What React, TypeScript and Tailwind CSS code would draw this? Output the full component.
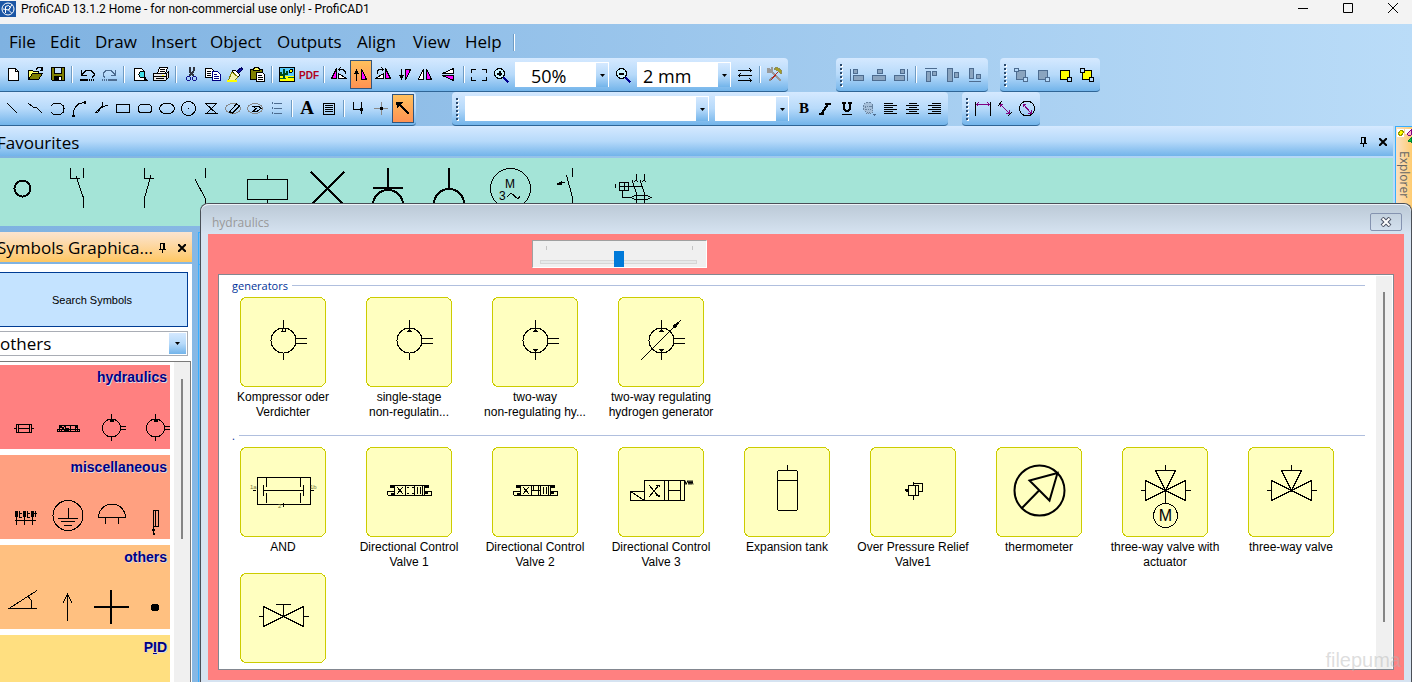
import { useState, type ReactNode } from 'react';
import clsx from 'clsx';

const BAR = 'bg-linear-to-b from-[#d5e9ff] via-[#b7dafa] to-[#72b4ea]';
const UI_FONT = "font-['Open_Sans','Noto_Sans',sans-serif]";
const MAGENTA = '#ff00ff';
const DIM = '#8aa4bf';
const DIM_LINE = '#4d6c90';

const menuItems = [
  { label: 'File', width: 'w-[41px]' },
  { label: 'Edit', width: 'w-[45px]' },
  { label: 'Draw', width: 'w-[56px]' },
  { label: 'Insert', width: 'w-[59px]' },
  { label: 'Object', width: 'w-[67px]' },
  { label: 'Outputs', width: 'w-[80px]' },
  { label: 'Align', width: 'w-[56px]' },
  { label: 'View', width: 'w-[52px]' },
  { label: 'Help', width: 'w-[45px]' }
];

// Toolbar glyphs, drawn on a 20x21 grid
const glyphs: Record<string, ReactNode> = {
  new: <><path d="M5.5 4.5h7l3 3v9h-10z" fill="#fff" /><path d="M12.5 4.5v3h3" /></>,
  open: (
    <>
      <path d="M3.5 15.5v-9h4l1 1h5v3" fill="#ffff66" />
      <path d="M3.5 15.5l4-6h10l-4 6z" fill="#808000" />
      <path d="M11 5.5l2-2h3l1 2M17.5 3v3h-3" />
    </>
  ),
  save: (
    <>
      <path d="M4.5 3.5h13v13h-12l-1-1z" fill="#808000" />
      <path d="M7.5 3.5h7v6h-7z" fill="#c3dff8" />
      <path d="M7 12h8v4h-8z" fill="#000" stroke="none" />
      <path d="M12 13h2v3h-2z" fill="#fff" stroke="none" />
    </>
  ),
  undo: <><path d="M4.500 6v5h5M5 10.500l4-4h5l3 3v2l-2 2" /><path d="M3 16h8" strokeWidth="2" /><path d="M12 16h6" strokeWidth="2" strokeDasharray="1 1" /></>,
  redo: <g stroke={DIM_LINE}><path d="M16.500 6v5h-5M16 10.500l-4-4h-5l-3 3v2l2 2" /><path d="M9 16h9" strokeWidth="2" /><path d="M3 16h6" strokeWidth="2" strokeDasharray="1 1" /></g>,
  preview: (
    <>
      <path d="M5.5 4.500h7l3 3v9h-10z" fill="#fff" />
      <circle cx="13" cy="10.500" r="3" fill="#40e0e8" />
      <path d="M15 13l3 4" strokeWidth="2" />
    </>
  ),
  print: (
    <>
      <path d="M6.500 9.500l2-6h8l-2 6z" fill="#fff" />
      <path d="M9 5.500h5M8.500 7.500h5" />
      <path d="M2.500 9.500h13l2-2v6l-3 3h-12z" fill="#e8e8e8" />
      <path d="M3 12.500h12M5 14.500h8M15.500 9v6" />
      <path d="M11 11h2v1h-2z" fill="#ff0" stroke="none" />
    </>
  ),
  cut: (
    <>
      <path d="M8.500 3v4l4 5M12.500 3v4l-4 5" stroke="#30343f" strokeWidth="2" />
      <g stroke="#10108c"><circle cx="7.500" cy="14.500" r="2" /><circle cx="13.500" cy="14.500" r="2" /></g>
    </>
  ),
  copy: (
    <>
      <path d="M2.500 4.500h6l2 2v7h-8z" fill="#fff" />
      <path d="M4 7.500h4M4 9.500h4M4 11.500h4" />
      <g stroke="#000080"><path d="M9.500 7.500h5l3 3v6h-8z" fill="#fff" /><path d="M11 10.500h3M11 12.500h5M11 14.500h5" /></g>
    </>
  ),
  brush: (
    <>
      <path d="M16.500 3.500l1 2-4 4-2-2z" fill="#1010a0" stroke="#000060" />
      <path d="M10 6l5 5-2 2-6-6z" fill="#fff" />
      <path d="M7 8l6 5-4 4H3z" fill="#f2f2b0" stroke="#808000" />
      <path d="M2 17h10" stroke="#ff0" strokeWidth="2" />
    </>
  ),
  paste: (
    <>
      <path d="M3.500 5.500h12v10h-12z" fill="#808000" />
      <path d="M6.500 5.500l1-2h4l1 2v1h-6z" fill="#ffff66" />
      <path d="M9.500 8.500h6l2 2v7h-8z" fill="#fff" />
      <path d="M11 11.500h4M11 13.500h5M11 15.500h5" />
    </>
  ),
  image: (
    <>
      <path d="M2.500 3.500h15v14h-15z" fill="#5cf" />
      <path d="M3 12h14v5h-14z" fill="#ff0" stroke="none" />
      <path d="M7 5v10M4 8v3h3M10 7v3h-3" stroke="#004818" strokeWidth="2" />
      <circle cx="14" cy="7" r="1.500" fill="#ff0" />
      <path d="M3 14.500h6M11 13.500h6" stroke="#063" />
    </>
  ),
  pdf: (
    <text x="10" y="15" textAnchor="middle" fill="#b0001c" stroke="none" className="font-['Liberation_Sans_Narrow','Liberation_Sans',sans-serif] text-[10px] font-bold">
      PDF
    </text>
  ),
  rotateLeft: (
    <>
      <path d="M7.500 4.500v10h-5z" fill={MAGENTA} />
      <path d="M9.500 9.500l8 5h-8z" fill="#fff" />
      <path d="M10 5.500h4l2 2v2M11.500 3.500l-2 2 2 2" />
    </>
  ),
  upright: <><path d="M10.500 5v10.500h5z" fill={MAGENTA} /><path d="M5.500 6v10.500" /><path d="M3 10l2.500-5L8 10z" fill="#000" stroke="none" /></>,
  rotateRight: (
    <>
      <path d="M12.500 4.500v10h5z" fill={MAGENTA} />
      <path d="M10.500 9.500l-8 5h8z" fill="#fff" />
      <path d="M10 5.500h-4l-2 2v2M8.500 3.500l2 2-2 2" />
    </>
  ),
  inverted: <><path d="M10.500 16V5.500h5z" fill={MAGENTA} /><path d="M6.500 5v10" /><path d="M4 11l2.500 5L9 11z" fill="#000" stroke="none" /></>,
  mirrorH: <><path d="M6.500 5v10.500h-5z" fill="#fff" /><path d="M9.500 5v10.500h5z" fill={MAGENTA} /></>,
  mirrorV: <><path d="M14.500 4.500v5h-11z" fill="#fff" /><path d="M14.500 16.500v-5h-11z" fill={MAGENTA} /></>,
  fit: <path d="M2.500 9V5.500h4M13 5.500h4.500V9M17.500 13v3.500h-4.500M6.500 16.500h-4V13" />,
  zoomIn: (
    <>
      <circle cx="8.500" cy="9.500" r="5" fill="#c9f3ff" />
      <path d="M6 9.500h5M8.500 7v5" strokeWidth="2" />
      <path d="M12.500 13.500l5 5" stroke="#000090" strokeWidth="2" />
    </>
  ),
  zoomOut: (
    <>
      <circle cx="8.500" cy="9.500" r="5" fill="#c9f3ff" />
      <path d="M6 9.500h5" strokeWidth="2" />
      <path d="M12.500 13.500l5 5" stroke="#000090" strokeWidth="2" />
    </>
  ),
  swap: <path d="M3 6.500h14M14.500 4.500l2 2-2 2M3 11.500h14M5.500 9.500l-2 2 2 2M3 16.500h14M14.500 14.500l2 2-2 2" />,
  tools: (
    <>
      <path d="M4 5l12 12M3 4v4h3M7 3v4" stroke="#999" strokeWidth="2" />
      <path d="M4 17l3-3" stroke="#8b8b8b" strokeWidth="2" />
      <path d="M6 16l7-8" stroke="#b02a20" />
      <path d="M9 5l3-2 5 4-1 3-3-3z" fill="#a8a020" stroke="#8f8f58" />
    </>
  ),
  line: <path d="M4 5l10 10" />,
  polyline: <path d="M3 5l5 4h3l6 6" />,
  arc: <path d="M4 7.500l3-2h6l3 2 1 3-1 4-3 2h-6l-3-2" />,
  bezier: <><path d="M4.500 17v-4l2-4 3-3 5-1.500h2" /><path d="M3 17h3v2h-3zM15 3h2v3h-2z" fill="#000" stroke="none" /></>,
  curve: <path d="M17 7.500c-5 0-7 2-9 5-1 2-3 3-3 2s3-3 5-5 2-4 1-5" />,
  rect: <path d="M3.500 6.500h13v8h-13z" />,
  roundRect: <rect x="3.500" y="6.500" width="13" height="8" rx="3" />,
  ellipse: <ellipse cx="10" cy="10.500" rx="7.500" ry="5.500" />,
  circle: <><circle cx="9.500" cy="10.500" r="7" /><path d="M9 10.500h1" /></>,
  hourglass: <path d="M4 5.500h12M4 15.500h13M5 6l10 9M15 6l-9 9" />,
  ellipseCut: <><ellipse cx="10" cy="10.500" rx="7.500" ry="5" stroke="#888" /><path d="M6.500 14l7-8 3 2-7 7z" /></>,
  ellipsePart: <><ellipse cx="10" cy="10.500" rx="7.500" ry="5" stroke="#888" /><path d="M8 8.500h6l2 2-4 3h-4l3-3z" /></>,
  bullets: <path d="M7 5.500h8M7 10.500h8M7 15.500h8M5 4v2M5 9v2M5 14v2" stroke={DIM_LINE} />,
  text: <text x="10" y="16" textAnchor="middle" fill="#000" stroke="none" className="font-['Liberation_Serif',serif] text-[19px] font-bold">A</text>,
  note: <path d="M4.500 5.500h11v11h-11zM6 7.500h8M6 9.500h8M6 11.500h8M6 13.500h8" />,
  wire: <><path d="M4.500 4v7.500h8M12.500 4v12" /><path d="M11 10h3v3h-3z" fill="#000" stroke="none" /></>,
  node: <><path d="M3 10.500h14M10.500 4v13" stroke="#888" /><path d="M9 9h3v3H9z" fill="#000" stroke="none" /></>,
  pointer: <><path d="M5 5l11 11" strokeWidth="2" /><path d="M3 4h7l-6 6z" fill="#000" stroke="none" /></>,
  bold: <text x="11" y="15" textAnchor="middle" fill="#000" stroke="none" className="font-['Liberation_Serif',serif] text-[15px] font-bold">B</text>,
  italic: <path d="M4 15.500h5M10 5.500h6M7 15l6-9" strokeWidth="2" />,
  underline: <><path d="M7 5v6l2 2h2l2-2V5M5 5h4M11 5h4" strokeWidth="1.500" /><path d="M5 16.500h10" /></>,
  colour: (
    <g stroke="#66829f">
      <circle cx="9" cy="9" r="5" fill="#a5bfd9" strokeDasharray="2 1" />
      <circle cx="10" cy="12" r="4" fill="#a5bfd9" strokeDasharray="1 1" />
      <path d="M6 8h6M7 11h6M8 14h4" strokeDasharray="1 1" />
      <path d="M13 15.500h5l-2.500 3z" fill="#4d6c90" stroke="none" />
    </g>
  ),
  left: <path d="M3 5.500h9M3 7.500h13M3 9.500h9M3 11.500h13M3 13.500h9M3 15.500h13" />,
  center: <path d="M6 5.500h8M3 7.500h13M6 9.500h8M3 11.500h13M6 13.500h8M3 15.500h13" />,
  right: <path d="M7 5.500h9M3 7.500h13M7 9.500h9M3 11.500h13M7 13.500h9M3 15.500h13" />,
  alignLeft: <g stroke={DIM_LINE} fill={DIM}><path d="M3.500 5v12M6.500 5.500h4v4h-4zM6.500 11.500h10v5h-10z" /></g>,
  alignMiddle: <g stroke={DIM_LINE} fill={DIM}><path d="M8.500 5.500h5v4h-5zM3.500 11.500h13v5h-13z" /></g>,
  alignRight: <g stroke={DIM_LINE} fill={DIM}><path d="M16.500 5v12M9.500 5.500h4v4h-4zM3.500 11.500h10v5h-10z" /></g>,
  alignTop: <g stroke={DIM_LINE} fill={DIM}><path d="M4 4.500h12M5.500 7.500h4v10h-4zM11.500 7.500h4v4h-4z" /></g>,
  alignCenter: <g stroke={DIM_LINE} fill={DIM}><path d="M4.500 4.500h5v13h-5zM11.500 8.500h4v5h-4z" /></g>,
  alignBottom: <g stroke={DIM_LINE} fill={DIM}><path d="M4 17.500h12M4.500 4.500h4v10h-4zM11.500 10.500h4v4h-4z" /></g>,
  group: <g stroke={DIM_LINE} fill={DIM}><path d="M5.500 6.500h9v9h-9z" /><path d="M3.500 4.500h4v3h-4zM12.500 13.500h4v4h-4z" fill="#b7dafa" /></g>,
  ungroup: <g stroke={DIM_LINE} fill={DIM}><path d="M5.500 6.500h9v9h-9z" /><path d="M12.500 13.500h4v4h-4z" fill="#b7dafa" /></g>,
  toFront: <><path d="M5.500 6.500h9v9h-9z" fill="#ff0" /><path d="M12.500 13.500h4v4h-4z" fill="#b7dafa" /></>,
  toBack: <><path d="M5.500 6.500h9v9h-9z" fill="#ff0" /><path d="M3.500 4.500h4v4h-4zM12.500 13.500h4v4h-4z" fill="#b7dafa" /></>,
  dimH: <><path d="M2.500 4v14M17.500 4v14" /><path d="M3 6.500h14M5.500 4.500l-2 2 2 2M14.500 4.500l2 2-2 2" stroke="#800080" /></>,
  dimSlant: <><path d="M3 8l4-5M13 18l4-4" /><path d="M5 6l9 9M5 9V6h3M14 12v3h-3" stroke="#800080" /></>,
  dimRound: <><circle cx="10" cy="10.500" r="7.500" /><path d="M6 6l8 9M6 9V6h3M14 12v3h-3" stroke="#800080" /></>
};

const drawTools = ['line', 'polyline', 'arc', 'bezier', 'curve', 'rect', 'roundRect', 'ellipse', 'circle', 'hourglass', 'ellipseCut', 'ellipsePart', 'bullets'];

function Tool({ name, active = false }: { name: string; active?: boolean }) {
  return (
    <button
      type="button"
      aria-label={name}
      className={clsx(
        'flex w-[22px] shrink-0 items-center justify-center',
        active ? 'my-[2px] border border-[#31557c] bg-linear-to-b from-[#ffc05c] to-[#ff9252]' : 'h-full'
      )}
    >
      <svg viewBox="0 0 20 21" className="h-[21px] w-[20px] shrink-0" fill="none" stroke="#000" shapeRendering="crispEdges">
        {glyphs[name]}
      </svg>
    </button>
  );
}

function Tools({ names }: { names: string[] }) {
  return <>{names.map((name) => <Tool key={name} name={name} />)}</>;
}

function Divider() {
  return (
    <span className="flex w-2 shrink-0 items-center justify-center">
      <span className="h-[17px] w-[2px] border-r border-white bg-[#6f9cc4]" />
    </span>
  );
}

function Grip() {
  return (
    <span className="flex w-[10px] shrink-0 flex-col items-center justify-center gap-[2px]">
      {[0, 1, 2, 3, 4, 5].map((dot) => (
        <span key={dot} className="size-[2px] bg-[#2b4a6d] shadow-[1px_1px_0_#fff]" />
      ))}
    </span>
  );
}

function Bar({ floating = false, children }: { floating?: boolean; children: ReactNode }) {
  return (
    <div className={clsx('flex h-[34px] shrink-0 items-stretch rounded-r border-b border-[#2f6596] pr-[2px]', floating ? 'rounded-l' : 'pl-[2px]', BAR)}>
      {floating ? <Grip /> : null}
      {children}
    </div>
  );
}

function Combo({ label, value, width, indent = 'pl-1' }: { label: string; value: string; width: string; indent?: string }) {
  return (
    <span className={clsx('relative mx-[3px] my-1 flex shrink-0 bg-white', width)}>
      <select aria-label={label} defaultValue={value} className={clsx('w-full appearance-none text-[18px] leading-[28px]', UI_FONT, indent)}>
        <option>{value}</option>
      </select>
      <span className={clsx('pointer-events-none absolute top-px right-px bottom-0 flex w-[12px] items-center justify-center', BAR)}>
        <ArrowDown />
      </span>
    </span>
  );
}

function ArrowDown() {
  return (
    <svg viewBox="0 0 5 3" className="h-[3px] w-[5px]">
      <path d="M0 0h5L2.500 3z" />
    </svg>
  );
}

function PanelButtons({ gap }: { gap: string }) {
  return (
    <span className={clsx('flex items-center', gap)}>
      <button type="button" aria-label="Pin panel">
        <svg viewBox="0 0 8 10" className="h-[10px] w-[8px]" fill="none" stroke="#000" shapeRendering="crispEdges">
          <path d="M1.500 6V.5h4V6M4.500 1v5M0 6.500h7M3.500 6v4" />
        </svg>
      </button>
      <button type="button" aria-label="Close panel">
        <svg viewBox="0 0 8 8" className="size-[8px]" stroke="#000" strokeWidth="2">
          <path d="M0 0l8 8M8 0l-8 8" />
        </svg>
      </button>
    </span>
  );
}

const favourites: { name: string; art: ReactNode }[] = [
  { name: 'terminal', art: <circle cx="30.500" cy="30.500" r="8" strokeWidth="2" /> },
  { name: 'change-over contact', art: <path d="M17.500 10v10.500h9M30.500 10v10M23 18l7.500 22v10" /> },
  { name: 'break contact', art: <path d="M30.500 10v10.500h9M37 17l-6.500 23v10" /> },
  { name: 'make contact', art: <path d="M30.500 10v10M20 21l10.500 20v9" /> },
  { name: 'coil', art: <path d="M11.500 21.500h40v20h-40zM31.500 17v4M31.500 42v4" /> },
  { name: 'lamp', art: <path d="M14 14l33 33M47 14l-33 33" strokeWidth="2" /> },
  { name: 'socket with earth', art: <path d="M30 10v20M15 30h30M15 47a15 15 0 0 1 30 0" strokeWidth="2" /> },
  { name: 'socket', art: <path d="M30 10v21M15 46a15 15 0 0 1 30 0" strokeWidth="2" /> },
  {
    name: 'three-phase motor',
    art: (
      <>
        <circle cx="30.500" cy="30.500" r="20" />
        <path d="M27 39l4-4 7 6 2-3" />
        <g fill="#000" stroke="none" className="font-['Liberation_Sans',sans-serif] text-[12px]">
          <text x="30" y="30" textAnchor="middle">M</text>
          <text x="19" y="42">3</text>
        </g>
      </>
    )
  },
  { name: 'auxiliary contact', art: <><path d="M31.500 10v9M25.500 17l6 23v9M17 26l7-2" /><path d="M16 26l4-2v2z" fill="#000" /></> },
  {
    name: 'circuit breaker',
    art: (
      <>
        <path d="M17.500 24.500h9v8h-9zM22 24v9M18 28.500h23M13.500 26v4M20.500 33v6.500h8" />
        <path d="M34.500 16v7M42.500 16v7M32 24l2-2 2 2M40 24l2-2 2 2M30 22l4.500 13v16M38 22l4.500 13v16" />
        <path d="M29 39.500l4-2h12l4 2-4 2h-12z" />
      </>
    )
  }
];

const pumpBody = <><circle cx="43.500" cy="43.500" r="12.500" /><path d="M43.500 23v8M43.500 56v7M56 41.500h10.500M56 46.500h10.500" /></>;
const topHead = <path d="M43.500 31l-2.500 4h5z" fill="#000" stroke="none" />;
const bottomHead = <path d="M43.500 56l-2.500-4h5z" fill="#000" stroke="none" />;
const valveBody = <path d="M43.500 43.500L33.500 23.500h20zM43.500 43.500l-20-10v20zM43.500 43.500l20-10v20zM43.500 18v5M19 43.500h4M64 43.500h5" />;
const controlFrame = (
  <>
    <path d="M28.500 38.500h30v10h-30zM21.500 48.500h44M21.500 44.500h7M58.500 44.500h7M21.500 44v4M65.500 44v4M39.500 38v10M48.500 38v10M56.500 38v10" />
    <path d="M24 38h5v3h-5zM58 38h5v3h-5zM25 46h3v2h-3zM59 45h3v2h-3z" fill="#000" stroke="none" />
    <path d="M31 40l6 7M37 40l-6 7M51.500 40v7M54.500 40v7" />
  </>
);

interface SymbolCard {
  lines: string[];
  art: ReactNode;
}

const generators: SymbolCard[] = [
  { lines: ['Kompressor oder', 'Verdichter'], art: <>{pumpBody}<path d="M42 31.500v3M45 31.500v3M41 34.500h5" /></> },
  { lines: ['single-stage', 'non-regulatin...'], art: <>{pumpBody}{topHead}</> },
  { lines: ['two-way', 'non-regulating hy...'], art: <>{pumpBody}{topHead}{bottomHead}</> },
  {
    lines: ['two-way regulating', 'hydrogen generator'],
    art: <>{pumpBody}{topHead}{bottomHead}<path d="M23 63l40-40" /><path d="M61 25l-6 4 2 2z" fill="#000" /></>
  }
];

const hydraulicParts: SymbolCard[] = [
  {
    lines: ['AND'],
    art: (
      <>
        <path d="M17.500 30.500h53v27h-53zM26.500 30v10M26.500 46v10M60.500 30v10M60.500 46v10M23.500 43.500h40M23.500 38v11M63.500 38v11M13 43.500h3M71 43.500h3M43.500 56v4" />
        <g fill="#77773c" stroke="none" className="font-['Liberation_Sans',sans-serif] text-[6px]">
          <text x="10" y="42">1a</text>
          <text x="70" y="42">1b</text>
          <text x="38" y="61">2</text>
        </g>
      </>
    )
  },
  { lines: ['Directional Control', 'Valve 1'], art: <>{controlFrame}<path d="M41 40.500h2M46 40.500h2M41 46.500h2M46 46.500h2" /></> },
  { lines: ['Directional Control', 'Valve 2'], art: <>{controlFrame}<path d="M40 43.500h8M41.500 39v5M46.500 39v9" /></> },
  {
    lines: ['Directional Control', 'Valve 3'],
    art: (
      <>
        <path d="M26.500 33.500h40v20h-40zM12.500 44.500h14v9h-14zM12.500 44.500l14 9M46.500 33v20M50.500 33v20M62.500 33v20M50.500 43.500h12" />
        <path d="M31 38l10 12M41 38l-10 12M38 48h3v2M41 40v-2h-3" />
        <path d="M67 33.500l1 4 2-4 1 4 1-4 1 4 1-4 1 4" shapeRendering="auto" />
      </>
    )
  },
  { lines: ['Expansion tank'], art: <><rect x="33.500" y="23.500" width="20" height="40" rx="2" /><path d="M34 33.500h19M43.500 18v5" /></> },
  {
    lines: ['Over Pressure Relief', 'Valve1'],
    art: <><path d="M38.500 38.500h10v10h-10zM43.500 38v-2h9v8h-4M45.500 38v10M43.500 35v3M43.500 49v4" /><path d="M36 43.500h2M35 43l3-1v3z" fill="#000" /></>
  },
  {
    lines: ['thermometer'],
    art: <g strokeWidth="2" shapeRendering="auto"><circle cx="43.500" cy="43.500" r="25" /><path d="M26 61l17.500-18M61.500 26L33.500 33.500 53.500 53.500z" /></g>
  },
  {
    lines: ['three-way valve with', 'actuator'],
    art: (
      <>
        {valveBody}
        <path d="M43.500 44v12" />
        <circle cx="43.500" cy="68.500" r="12" />
        <text x="43.500" y="74" textAnchor="middle" fill="#000" stroke="none" className="font-['Liberation_Sans',sans-serif] text-[16px]">M</text>
      </>
    )
  },
  { lines: ['three-way valve'], art: valveBody },
  { lines: [], art: <path d="M43.500 43.500l-20-10v20zM43.500 43.500l20-10v20zM19 43.500h4M64 43.500h5M43.500 43V31.500M36 31.500h15" /> }
];

// Small previews, each on a 44x42 grid
const pumpPreview = <><circle cx="21.500" cy="21" r="9" /><path d="M21.500 7v5M21.500 30v4M31 19.500h5M31 22.500h5" /><path d="M20 13h4v2h-4z" fill="#000" stroke="none" /></>;

const categories: { name: string; colour: string; previews: ReactNode[] }[] = [
  {
    name: 'hydraulics',
    colour: 'bg-[#ff8080]',
    previews: [
      <path d="M14.500 17.500h15v8h-15zM16.500 17v8M27.500 17v8M17 21.500h10M12 21.500h2M30 21.500h2" />,
      <><path d="M11.500 22.500h22v2h-22zM13.500 18.500h18v6h-18zM19.500 18v6M24.500 18v6M29.500 18v6M15 19l4 5M19 19l-4 5" /><path d="M13 18h3v3h-3zM20 21h3v3h-3zM29 18h2v3h-2z" fill="#000" stroke="none" /></>,
      pumpPreview,
      pumpPreview
    ]
  },
  {
    name: 'miscellaneous',
    colour: 'bg-[#ffa080]',
    previews: [
      <><path d="M13 23.500h21M14.500 20v8M22.500 20v8M30.500 20v8M17.500 14v6h2M25.500 14v6h2M33.500 14v6M17 16.500h3M25 16.500h3M32 16.500h3" /><path d="M13 14h3v6h-3zM21 14h3v6h-3zM29 14h3v6h-3z" fill="#000" stroke="none" /></>,
      <><circle cx="22" cy="18.500" r="15" /><path d="M22.500 11v10M12 21.500h20M15 24.500h14M18 28.500h8" /></>,
      <path d="M8.500 20.500a13 13 0 0 1 27 0zM15.500 20v7M28.500 20v7" />,
      <><path d="M19.500 13.500h5v16h-5zM21.500 13v16M19.500 30v8" /><path d="M18 32h3v2h-3zM19 36h2v2h-2z" fill="#000" stroke="none" /></>
    ]
  },
  {
    name: 'others',
    colour: 'bg-[#ffc080]',
    previews: [
      <path d="M35 3.500L7 21.500h28M26 9l3 4 1 8" />,
      <path d="M21.500 8v26M17 16l4.500-9 4.500 9" />,
      <path d="M4 20h35M21 3v34" strokeWidth="2" />,
      <circle cx="21" cy="20.500" r="3.500" fill="#000" />
    ]
  },
  { name: 'PID', colour: 'bg-[#ffdf80]', previews: [] }
];

function SymbolGroup({ title, items }: { title: string; items: SymbolCard[] }) {
  return (
    <section>
      <div className="mb-[2px] ml-3 flex h-[20px] items-center gap-1">
        <h3 className={clsx('text-[11px] leading-none text-[#003399]', UI_FONT)}>{title}</h3>
        <span className="mr-[11px] h-px flex-1 bg-[#b0bfde]" />
      </div>
      <div className="flex flex-wrap">
        {items.map((item, index) => (
          <button key={index} type="button" className="flex h-[126px] w-[126px] flex-col items-center text-center text-[12px] leading-[15px]">
            <svg viewBox="0 0 86 90" className="h-[90px] w-[86px] shrink-0" fill="none" stroke="#000" shapeRendering="crispEdges">
              <rect x="0.500" y="0.500" width="85" height="89" rx="6" fill="#ffffc0" stroke="#cccc00" />
              {item.art}
            </svg>
            <span className="mt-[3px] whitespace-nowrap">
              {item.lines.map((line) => (
                <span key={line} className="block">{line}</span>
              ))}
            </span>
          </button>
        ))}
      </div>
    </section>
  );
}

function HydraulicsWindow() {
  const [size, setSize] = useState(50);

  return (
    <div className="absolute top-[203px] right-0 bottom-0 left-[200px] flex flex-col rounded-t-lg border border-b-0 border-[#4a4f57] bg-[#d6e3f1] px-[7px] pb-[2px]">
      <div className="-mx-[7px] flex h-[30px] shrink-0 items-center justify-between rounded-t-lg border-t border-[#eef3f8] bg-linear-to-b from-[#bccad7] to-[#d6e3f1] pr-[9px] pl-[11px]">
        <h2 className={clsx('mt-[7px] text-[12px] text-[#999]', UI_FONT)}>hydraulics</h2>
        <button type="button" aria-label="Close window" className="mt-1 flex h-[18px] w-[32px] items-center justify-center rounded-xs border border-[#8593b0]">
          <svg viewBox="0 0 12 10" className="h-[10px] w-[12px]">
            <path d="M2 1l8 8M10 1l-8 8" stroke="#4b5163" strokeWidth="4" />
            <path d="M2.500 1.500l7 7M9.500 1.500l-7 7" stroke="#fff" strokeWidth="2" />
          </svg>
        </button>
      </div>
      <div className="flex min-h-0 flex-1 flex-col bg-[#ff8080] px-[10px] pt-[6px] pb-[10px]">
        <div className="relative ml-[314px] h-[28px] w-[175px] shrink-0 border border-t-[#a0a0a0] border-r-white border-b-white border-l-[#a0a0a0] bg-[#f0f0f0]">
          <div className="flex justify-between px-[13px] pt-[5px]">
            <span className="h-1 w-px bg-[#c4c4c4]" />
            <span className="h-1 w-px bg-[#c4c4c4]" />
          </div>
          <input
            type="range"
            aria-label="Symbol size"
            value={size}
            onChange={(event) => setSize(Number(event.target.value))}
            className="absolute bottom-0 left-[7px] h-[10px] w-[157px] appearance-none bg-transparent [&::-webkit-slider-runnable-track]:h-[4px] [&::-webkit-slider-runnable-track]:border [&::-webkit-slider-runnable-track]:border-[#d6d6d6] [&::-webkit-slider-runnable-track]:bg-[#e7eaea] [&::-webkit-slider-thumb]:-mt-[10px] [&::-webkit-slider-thumb]:h-[16px] [&::-webkit-slider-thumb]:w-[10px] [&::-webkit-slider-thumb]:appearance-none [&::-webkit-slider-thumb]:bg-[#007ad9]"
          />
        </div>
        <div className="mt-[6px] flex min-h-0 flex-1 border border-[#828790] bg-white">
          <div className="flex min-w-0 flex-1 flex-col gap-[2px] overflow-hidden pl-px">
            <SymbolGroup title="generators" items={generators} />
            <SymbolGroup title="." items={hydraulicParts} />
          </div>
          <div className="mr-px mt-px flex w-[16px] justify-center bg-[#f0f0f0] pt-4 pb-[47px]">
            <span className="w-[2px] bg-[#858585]" />
          </div>
        </div>
      </div>
      <span className="absolute right-[10px] bottom-[10px] text-[20px] leading-[24px] text-[#b4b4b4]/45">filepuma</span>
    </div>
  );
}

function SymbolsPanel() {
  return (
    <aside className="flex w-[200px] shrink-0 flex-col">
      <div className="flex h-[30px] shrink-0 items-center justify-between bg-linear-to-b from-[#fbe4d0] to-[#ffc75f] pt-[2px] pr-[6px] pl-[5px]">
        <h2 className={clsx('text-[17px] whitespace-nowrap', UI_FONT)}>Symbols Graphica...</h2>
        <PanelButtons gap="gap-[11px]" />
      </div>
      <div className="mt-[2px] flex min-h-0 flex-1 flex-col bg-white pt-2">
        <button type="button" className="mx-1 h-[55px] shrink-0 border border-[#003c93] bg-[#c4e3ff] pt-px text-[11px]">
          Search Symbols
        </button>
        <span className="relative mx-1 mt-1 flex h-[25px] shrink-0 border border-[#a9adb5]">
          <select aria-label="Library" defaultValue="others" className={clsx('w-full appearance-none pt-px pl-[3px] text-[17px] leading-[22px]', UI_FONT)}>
            <option>others</option>
          </select>
          <span className={clsx('pointer-events-none absolute top-px right-px bottom-px flex w-[17px] items-center justify-center', BAR)}>
            <ArrowDown />
          </span>
        </span>
        <div className="mt-[5px] mr-px flex min-h-0 flex-1 border-t border-r border-[#7a7a7a]">
          <ul className="flex min-w-0 flex-1 flex-col gap-[6px] overflow-hidden pt-[3px] pr-1">
            {categories.map((category) => (
              <li key={category.name} className="shrink-0">
                <button type="button" className={clsx('flex h-[84px] w-full flex-col justify-between overflow-hidden', category.colour)}>
                  <span className="mt-[3px] w-full pr-[3px] text-right text-[14px] leading-[18px] font-bold text-[#000080] [text-shadow:1px_1px_0_#d8d8e8]">
                    {category.name === 'PID' ? <>P<u>I</u>D</> : category.name}
                  </span>
                  <span className="flex pl-[10px]">
                    {category.previews.map((preview, index) => (
                      <svg key={index} viewBox="0 0 44 42" className="h-[42px] w-[44px] shrink-0" fill="none" stroke="#000" shapeRendering="crispEdges">
                        {preview}
                      </svg>
                    ))}
                  </span>
                </button>
              </li>
            ))}
          </ul>
          <div className="flex w-[16px] justify-center bg-[#f0f0f0] pt-[17px]">
            <span className="h-[160px] w-[2px] bg-[#858585]" />
          </div>
        </div>
      </div>
    </aside>
  );
}

function TitleBar() {
  return (
    <header className="flex h-6 shrink-0 items-start justify-between bg-[#f3f3f3]">
      <div className="flex items-center gap-[5px]">
        <svg viewBox="0 0 16 16" className="size-4" fill="none" stroke="#fff">
          <path d="M0 0h16v16H0z" fill="#1b56a5" stroke="none" />
          <circle cx="8" cy="8" r="6" />
          <path d="M5.500 12V5.500l3-1 2 2-2 2.500 3 3M3 8l5.500 1L12 3.500" />
        </svg>
        <h1 className="font-['Roboto',sans-serif] text-[12px] leading-[18px]">ProfiCAD 13.1.2 Home - for non-commercial use only! - ProfiCAD1</h1>
      </div>
      <div className="mt-[2px] mr-[13px] flex gap-[33px]">
        {['M1 6.500h10', 'M1.500 1.500h9v9h-9z', 'M1 1l10 10M11 1L1 11'].map((shape, index) => (
          <button key={shape} type="button" aria-label={['Minimize', 'Maximize', 'Close'][index]}>
            <svg viewBox="0 0 12 12" className="size-3" fill="none" stroke="#000">
              <path d={shape} />
            </svg>
          </button>
        ))}
      </div>
    </header>
  );
}

export default function App() {
  return (
    <div className="relative flex h-screen flex-col overflow-hidden bg-linear-to-r from-[#7fb2e1] to-[#badcf8] font-['Liberation_Sans',Arial,sans-serif] text-black">
      <TitleBar />
      <nav className={clsx('flex h-[34px] shrink-0 items-center pt-[2px] pl-[9px] text-[17px]', UI_FONT)}>
        {menuItems.map(({ label, width }) => (
          <button key={label} type="button" className={clsx('shrink-0 text-left', width)}>
            {label}
          </button>
        ))}
        <Divider />
      </nav>

      <div className="flex shrink-0">
        <Bar>
          <Tools names={['new', 'open', 'save']} />
          <Divider />
          <Tools names={['undo', 'redo']} />
          <Divider />
          <Tools names={['preview', 'print']} />
          <Divider />
          <Tools names={['cut', 'copy', 'brush', 'paste']} />
          <Divider />
          <Tools names={['image', 'pdf']} />
          <Divider />
          <Tool name="rotateLeft" />
          <Tool name="upright" active />
          <Tools names={['rotateRight', 'inverted', 'mirrorH', 'mirrorV']} />
          <Divider />
          <Tools names={['fit', 'zoomIn']} />
          <Combo label="Zoom" value="50%" width="w-[94px]" indent="pl-4" />
          <Tool name="zoomOut" />
          <Combo label="Grid" value="2 mm" width="w-[94px]" indent="pl-[6px]" />
          <Tool name="swap" />
          <Divider />
          <Tool name="tools" />
        </Bar>
        <div className="ml-12 flex gap-3">
          <Bar floating>
            <Tools names={['alignLeft', 'alignMiddle', 'alignRight']} />
            <Divider />
            <Tools names={['alignTop', 'alignCenter', 'alignBottom']} />
          </Bar>
          <Bar floating>
            <Tools names={['group', 'ungroup', 'toFront', 'toBack']} />
          </Bar>
        </div>
      </div>

      <div className="flex shrink-0">
        <Bar>
          <Tools names={drawTools} />
          <Divider />
          <Tools names={['text', 'note']} />
          <Divider />
          <Tools names={['wire', 'node']} />
          <Tool name="pointer" active />
        </Bar>
        <div className="ml-[36px] flex gap-[14px]">
          <Bar floating>
            <Combo label="Font" value="" width="w-[244px]" />
            <Combo label="Font size" value="" width="w-[74px]" />
            <Tools names={['bold', 'italic', 'underline', 'colour', 'left', 'center', 'right']} />
          </Bar>
          <Bar floating>
            <Tools names={['dimH', 'dimSlant', 'dimRound']} />
          </Bar>
        </div>
      </div>

      {/* docked panels run 8px past the left edge of the screen */}
      <div className="-ml-2 flex min-h-0 flex-1">
        <div className="flex min-w-0 flex-1 flex-col">
          <div className={clsx('flex h-[30px] shrink-0 items-center justify-between pt-[2px] pr-[6px] pl-[5px]', BAR)}>
            <h2 className={clsx('pt-px text-[17px]', UI_FONT)}>Favourites</h2>
            <PanelButtons gap="gap-[11px]" />
          </div>
          <div className="mt-[2px] flex h-[68px] shrink-0 overflow-hidden bg-[#a4e4d7]">
            {favourites.map(({ name, art }) => (
              <button key={name} type="button" aria-label={name} className="w-[61px] shrink-0">
                <svg viewBox="0 0 61 68" className="h-[68px] w-[61px]" fill="none" stroke="#000" shapeRendering="crispEdges">
                  {art}
                </svg>
              </button>
            ))}
          </div>
          <div className="mt-[6px] flex min-h-0 flex-1 gap-[6px]">
            <SymbolsPanel />
            <main className="flex-1 border-t border-l border-[#36aeff]">
              <div className="h-[32px] border-b border-[#36aeff]" />
            </main>
          </div>
        </div>
        <div className="ml-[2px] flex w-[17px] shrink-0 flex-col items-center border-t border-l border-[#36aeff] bg-linear-to-r from-[#fae0c2] to-[#ffcc70] pt-[2px]">
          <svg viewBox="0 0 15 14" className="h-[14px] w-[15px] shrink-0" shapeRendering="crispEdges">
            <path d="M0 0h7v8H0zM8 0h7v5H8z" fill="#fff" />
            <path d="M1 5l3-4 3 2-3 4z" fill="#ff0" stroke="#999900" />
            <path d="M10 5l4-4v5l-2 1z" fill="#ffb0c8" stroke="#800080" />
            <path d="M11 12l3-3v4z" fill="#00d040" stroke="#008030" />
          </svg>
          <button type="button" className={clsx('mt-2 text-[12px] leading-[16px] text-[#666] [writing-mode:vertical-rl]', UI_FONT)}>
            Explorer
          </button>
        </div>
      </div>

      <HydraulicsWindow />
    </div>
  );
}
